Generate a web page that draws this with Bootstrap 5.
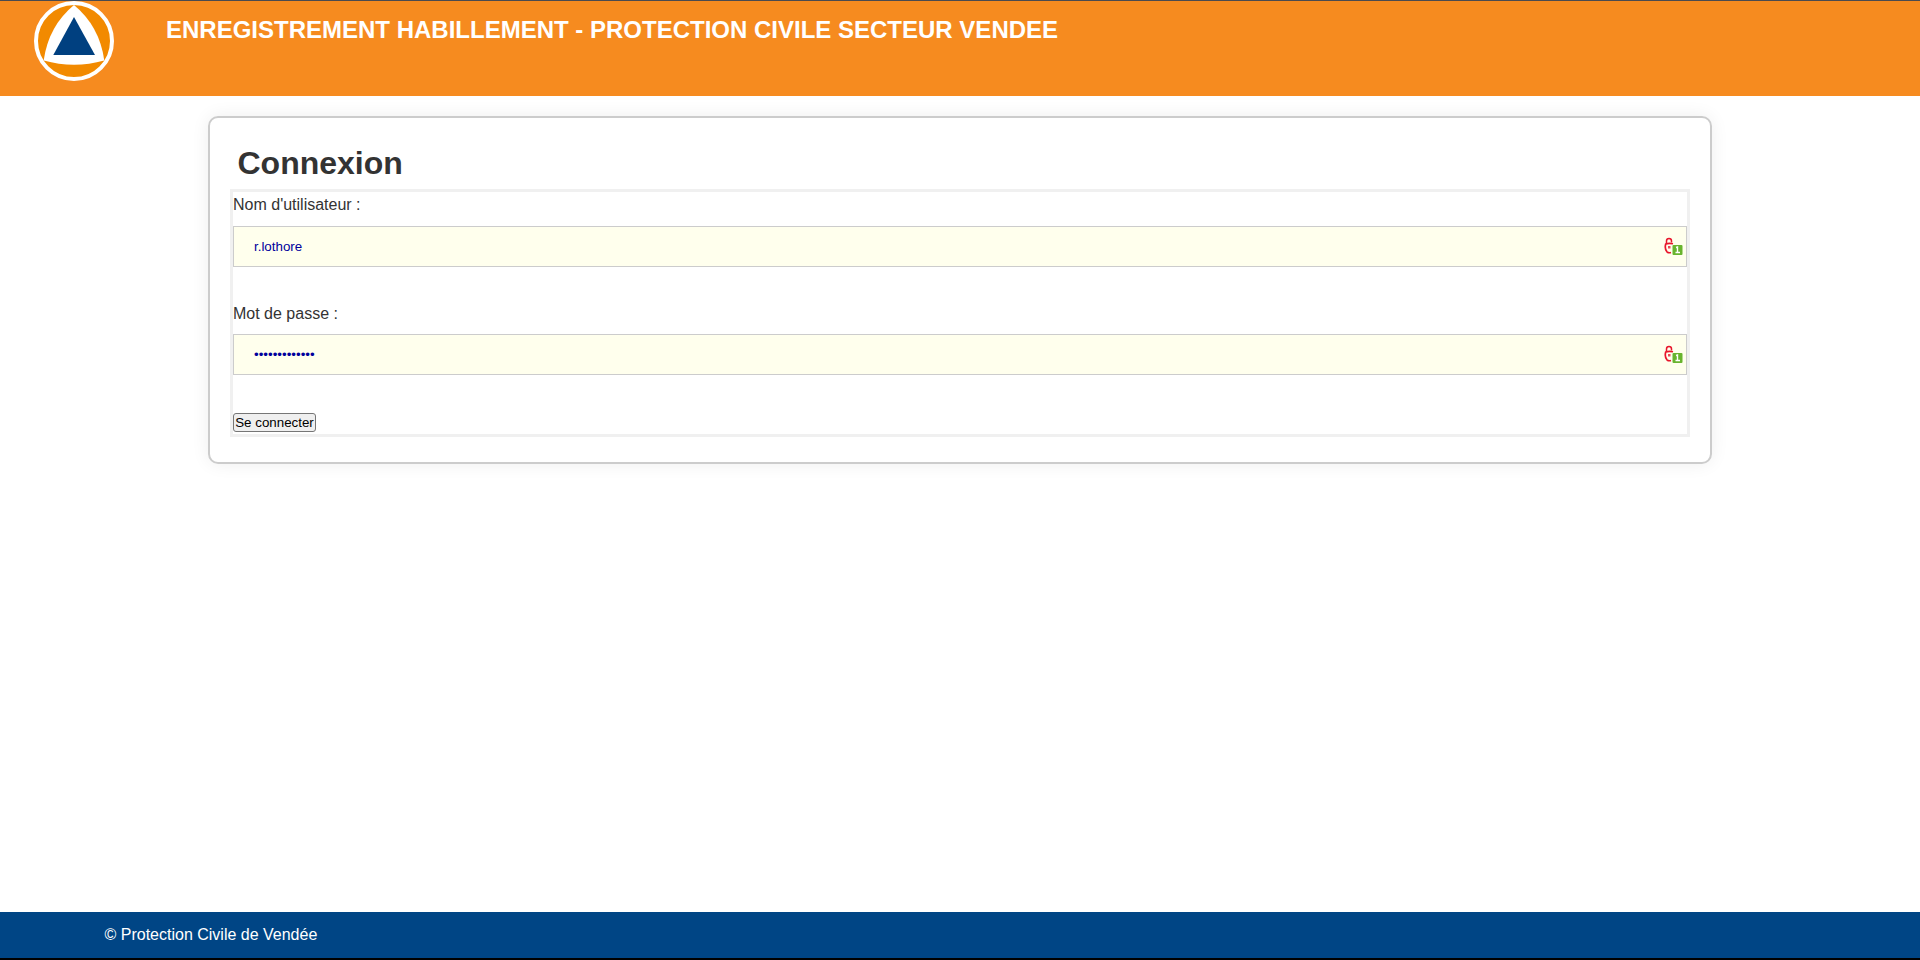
<!DOCTYPE html>
<html lang="fr">
<head>
<meta charset="utf-8">
<meta name="viewport" content="width=device-width, initial-scale=1">
<title>Connexion</title>
<link rel="stylesheet" href="https://cdn.jsdelivr.net/npm/bootstrap@5.3.0/dist/css/bootstrap.min.css">
<script src="https://cdn.jsdelivr.net/npm/bootstrap@5.3.0/dist/js/bootstrap.bundle.min.js" defer></script>
<style>
body{font-family:"Liberation Sans",Arial,sans-serif;font-size:16px;line-height:18px;color:#333;background:#fff;height:960px;overflow:hidden}
.site-header{height:96px;background:#f68b1f;border-top:1px solid #4a4a4f;padding-left:34px;gap:52px}
.site-header h1{font-size:24px;line-height:28px;font-weight:700;padding-top:15px}
.login-panel{width:1504px;height:348px;margin-top:20px;border:2px solid #ccc;border-radius:10px;box-shadow:0 0 18px rgba(0,0,0,.07);padding:20px}
.login-panel h2{font-size:32px;line-height:36px;font-weight:700;color:#333;padding:7px 0 0 7.500px;height:51px}
.login-form{border:3px solid #f0f0f0;height:248px}
.login-form label{height:34px;padding-top:4px}
.login-form .field+label{padding-top:5px}
.field{height:41px;margin-bottom:33px}
.login-form .form-control{height:41px;border:1px solid #ccc;background:#ffffed;color:#00009c;font-size:13.333px;line-height:15px;padding:12px 40px 12px 20px}
.lock-icon{right:4px;top:11px}
.btn-login{width:83px;height:19px;margin-top:38px;padding:0;border:1px solid #767676;border-radius:3px;background:#efefef;color:#000;font-size:13.333px;line-height:17px}
.login-form .field:has(+.btn-login){margin-bottom:0}
.site-footer{height:48px;background:#004585;border-bottom:2px solid #000;padding:14px 0 0 104.500px}
</style>
</head>
<body class="d-flex flex-column">
<header class="site-header d-flex align-items-start flex-shrink-0">
  <svg width="80" height="80" viewBox="0 0 80 80" aria-hidden="true">
    <circle cx="40" cy="40" r="38" fill="#f28a00" stroke="#fff" stroke-width="4"/>
    <path d="M40 4Q14.500 25 9.700 59.500Q40 68 70.300 59.500Q65.500 25 40 4Z" fill="#fff"/>
    <path d="M40 16L61 54H19.300Z" fill="#004080"/>
  </svg>
  <h1 class="text-white m-0">ENREGISTREMENT HABILLEMENT - PROTECTION CIVILE SECTEUR VENDEE</h1>
</header>
<main class="flex-grow-1">
  <section class="login-panel mx-auto">
    <h2 class="m-0">Connexion</h2>
    <form class="login-form">
      <label class="d-block" for="user">Nom d'utilisateur :</label>
      <div class="field position-relative">
        <input class="form-control rounded-0" id="user" type="text" value="r.lothore">
        <svg class="lock-icon position-absolute" width="19" height="19" viewBox="0 0 19 19" aria-hidden="true"><g fill="none" stroke="#e8152b"><path d="M2.500 6V4Q2.500 1.500 5 1.500Q7.500 1.500 7.500 4V5.500" stroke-width="1.500"/><path d="M9 6.800Q5 5.800 1.700 7Q.4 12 3 14.800Q4.500 16.200 7 15.500" stroke-width="1.700"/></g><path d="M4 9h2.500v2.500H4z" fill="#ef4858"/><rect x="8.500" y="8" width="10" height="10" rx="1" fill="#68b42e"/><path d="M12 10.500L13.500 10V15M11.500 15.500H16" stroke="#fff" stroke-width="1.400" fill="none"/></svg>
      </div>
      <label class="d-block" for="pass">Mot de passe :</label>
      <div class="field position-relative">
        <input class="form-control rounded-0" id="pass" type="password" value="motdepasse123">
        <svg class="lock-icon position-absolute" width="19" height="19" viewBox="0 0 19 19" aria-hidden="true"><g fill="none" stroke="#e8152b"><path d="M2.500 6V4Q2.500 1.500 5 1.500Q7.500 1.500 7.500 4V5.500" stroke-width="1.500"/><path d="M9 6.800Q5 5.800 1.700 7Q.4 12 3 14.800Q4.500 16.200 7 15.500" stroke-width="1.700"/></g><path d="M4 9h2.500v2.500H4z" fill="#ef4858"/><rect x="8.500" y="8" width="10" height="10" rx="1" fill="#68b42e"/><path d="M12 10.500L13.500 10V15M11.500 15.500H16" stroke="#fff" stroke-width="1.400" fill="none"/></svg>
      </div>
      <button class="btn btn-login d-block" type="button">Se connecter</button>
    </form>
  </section>
</main>
<footer class="site-footer flex-shrink-0 text-white">© Protection Civile de Vendée</footer>
</body>
</html>
